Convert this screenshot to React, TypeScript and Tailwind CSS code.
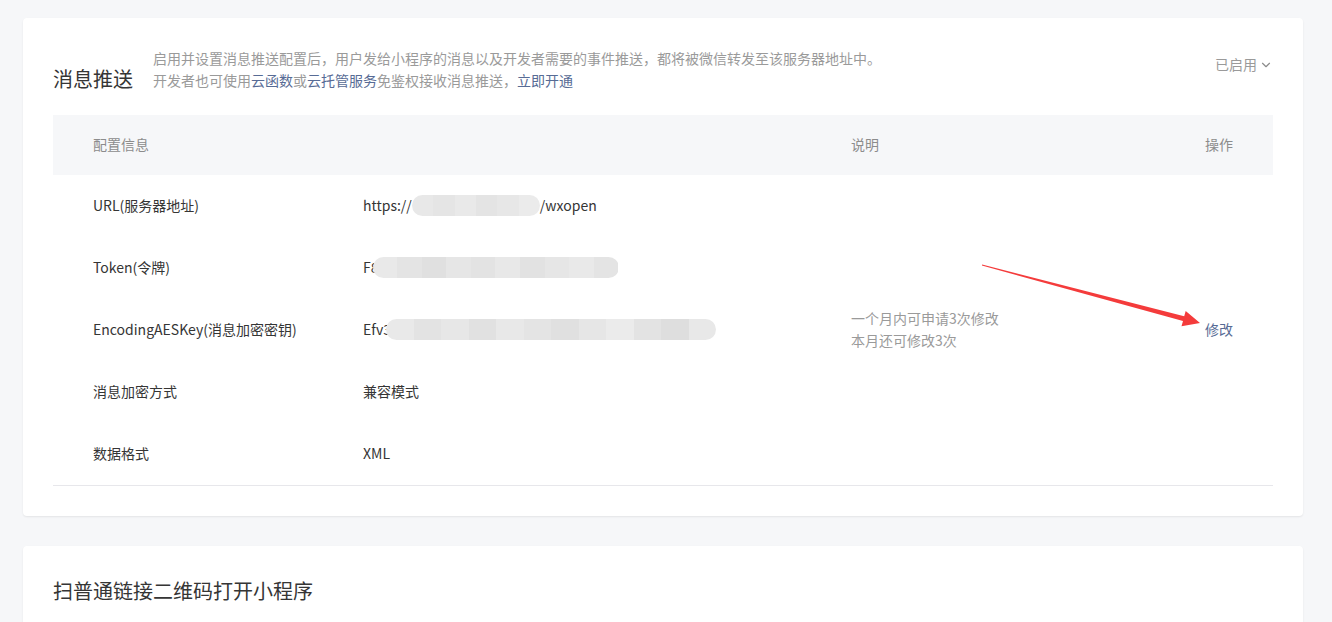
import { ChevronDown } from "lucide-react";

const FONT = '"Noto Sans CJK SC", "Noto Sans", "Liberation Sans", sans-serif';

// a pixel-mosaic style blur used to mask secrets
function Masked({ width, shades }: { width: number; shades: string[] }) {
  return (
    <span
      className="inline-flex h-[21px] overflow-hidden rounded-full align-middle blur-[0.6px]"
      style={{ width }}
    >
      {shades.map((c, i) => (
        <span key={i} className="h-full flex-1" style={{ backgroundColor: c }} />
      ))}
    </span>
  );
}

interface Row {
  label: string;
  value: React.ReactNode;
  desc?: string[];
  action?: string;
}

const rows: Row[] = [
  {
    label: "URL(服务器地址)",
    value: (
      <span className="inline-flex items-center">
        https://
        <Masked width={128} shades={["#e8e8e8", "#e5e5e5", "#e9e9e9", "#e4e4e4", "#e7e7e7", "#ebebeb"]} />
        /wxopen
      </span>
    ),
  },
  {
    label: "Token(令牌)",
    value: (
      <span className="inline-flex items-center">
        F8
        <span className="-ml-[6px] inline-flex">
          <Masked
            width={246}
            shades={["#e9e9e9", "#e4e4e4", "#e0e0e0", "#e6e6e6", "#e3e3e3", "#e8e8e8", "#e2e2e2", "#e6e6e6", "#e9e9e9", "#e4e4e4"]}
          />
        </span>
      </span>
    ),
  },
  {
    label: "EncodingAESKey(消息加密密钥)",
    value: (
      <span className="inline-flex items-center">
        Efv3
        <span className="-ml-[5px] inline-flex">
          <Masked
            width={330}
            shades={["#e9e9e9", "#e3e3e3", "#e7e7e7", "#e1e1e1", "#e8e8e8", "#e4e4e4", "#e0e0e0", "#e6e6e6", "#ebebeb", "#e3e3e3", "#dedede", "#e8e8e8"]}
          />
        </span>
      </span>
    ),
    desc: ["一个月内可申请3次修改", "本月还可修改3次"],
    action: "修改",
  },
  { label: "消息加密方式", value: "兼容模式" },
  { label: "数据格式", value: "XML" },
];

export default function App() {
  return (
    <div
      className="relative h-[622px] w-full overflow-hidden bg-[#f6f7f9] pl-[23px] pr-[29px] pt-[18px] text-[14px] text-[#353535]"
      style={{ fontFamily: FONT }}
    >
      {/* 消息推送 card */}
      <div className="rounded-[4px] bg-white px-[30px] pb-[30px] pt-[29px] shadow-[0_1px_2px_rgba(0,0,0,0.08)]">
        <div className="flex justify-between">
          <div className="flex items-end">
            <h2 className="mr-5 text-[20px] leading-[24px] text-[#353535]">消息推送</h2>
            <div className="leading-[22px] text-[#9a9a9a]">
              <p>启用并设置消息推送配置后，用户发给小程序的消息以及开发者需要的事件推送，都将被微信转发至该服务器地址中。</p>
              <p>
                开发者也可使用<a className="text-[#576b95]">云函数</a>或
                <a className="text-[#576b95]">云托管服务</a>免鉴权接收消息推送，
                <a className="text-[#576b95]">立即开通</a>
              </p>
            </div>
          </div>
          <button className="mt-[6px] flex h-[22px] items-center gap-[2px] self-start text-[#9a9a9a]">
            已启用
            <ChevronDown size={14} strokeWidth={2} className="mt-[1px] text-[#8c8c8c]" />
          </button>
        </div>

        {/* config table */}
        <div className="mt-6 border-b border-[#e7e7eb]">
          <div className="grid h-[60px] grid-cols-[270px_488px_1fr_auto] items-center bg-[#f6f7f9] px-10 pb-[2px] text-[#8c8c8c]">
            <span>配置信息</span>
            <span />
            <span>说明</span>
            <span>操作</span>
          </div>
          {rows.map((r) => (
            <div
              key={r.label}
              className="grid h-[62px] grid-cols-[270px_488px_1fr_auto] items-center px-10 pb-[2px]"
            >
              <span>{r.label}</span>
              <span>{r.value}</span>
              <span className="leading-[22px] text-[#9a9a9a]">
                {r.desc?.map((d) => (
                  <span key={d} className="block">
                    {d}
                  </span>
                ))}
              </span>
              <span className="text-[#576b95]">{r.action}</span>
            </div>
          ))}
        </div>
      </div>

      {/* second card */}
      <div className="mt-[30px] h-[120px] rounded-[4px] bg-white px-[30px] pt-[31px] shadow-[0_1px_2px_rgba(0,0,0,0.08)]">
        <h2 className="text-[20px] leading-[28px] text-[#353535]">扫普通链接二维码打开小程序</h2>
      </div>

      {/* red annotation arrow */}
      <svg
        className="pointer-events-none absolute left-0 top-0"
        width={1332}
        height={622}
        viewBox="0 0 1332 622"
      >
        <polygon
          points="982.1,264.5 1184.2,316.2 1185.7,310.9 1200,323 1181.5,326.3 1183,321 981.9,265.5"
          fill="#f43b3b"
        />
      </svg>
    </div>
  );
}
